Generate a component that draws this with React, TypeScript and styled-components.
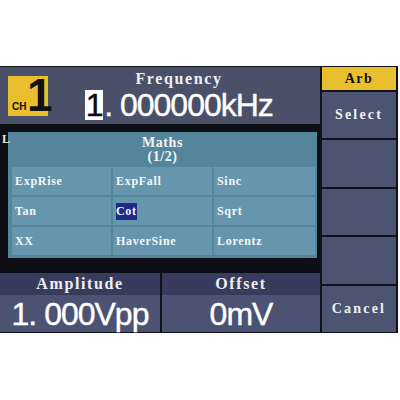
import React from "react";
import styled, { createGlobalStyle } from "styled-components";

const Global = createGlobalStyle`
  html, body { margin: 0; padding: 0; background: #ffffff; }
  body { width: 400px; height: 400px; overflow: hidden; }
`;

const serif = `"Liberation Serif", "DejaVu Serif", serif`;
const sans = `"Liberation Sans", Arial, sans-serif`;

const Page = styled.div`
  padding-top: 66px;
`;

const Screen = styled.div`
  display: flex;
  gap: 2px;
  width: 396px;
  height: 265px;
  padding: 1px 2px 1px 0;
  background: #0f1218;
`;

const MainColumn = styled.div`
  display: flex;
  flex-direction: column;
  width: 320px;
`;

const Header = styled.div`
  display: flex;
  align-items: center;
  height: 57px;
  padding: 0 10px 0 8px;
  background: #4a5068;
`;

const ChannelBadge = styled.div`
  position: relative;
  width: 40px;
  height: 40px;
  background: #e9bf2e;
  color: #111;
`;

const BadgeCh = styled.span`
  position: absolute;
  left: 4px;
  bottom: 4px;
  font: bold 10px ${sans};
`;

const BadgeNum = styled.span`
  position: absolute;
  left: 19px;
  top: -4px;
  font: bold 46px ${sans};
  line-height: 46px;
`;

const HeaderBody = styled.div`
  flex: 1;
  display: flex;
  flex-direction: column;
  align-items: center;
`;

const Label = styled.div`
  font: bold 16px ${serif};
  letter-spacing: 1.6px;
  color: #eef0f4;
  line-height: 18px;
`;

const BigValue = styled.div`
  font: 32px ${sans};
  letter-spacing: -1px;
  color: #ffffff;
  line-height: 34px;
  white-space: pre;
  -webkit-text-stroke: 0.4px #ffffff;
`;

const Cursor = styled.span`
  display: inline-block;
  width: 18px;
  margin-right: 1px;
  background: #ffffff;
  color: #0c0c14;
  -webkit-text-stroke: 0.4px #0c0c14;
  line-height: 30px;
  text-align: center;
`;

const WaveArea = styled.div`
  position: relative;
  flex: 1;
  padding: 8px 3px 0 8px;
  background: #0d0f14;
`;

const HiddenGlyph = styled.span`
  position: absolute;
  left: 2px;
  top: 8px;
  font: bold 12px ${serif};
  color: #e8e8e8;
`;

const Dialog = styled.div`
  display: flex;
  flex-direction: column;
  height: 126px;
  background: #54859b;
`;

const DialogTitle = styled.div`
  display: flex;
  flex-direction: column;
  align-items: center;
  justify-content: center;
  height: 35px;
  font: bold 14px ${serif};
  letter-spacing: 0.6px;
  line-height: 14px;
  color: #f2f4f6;
`;

const OptionGrid = styled.div`
  display: grid;
  grid-template-columns: 99px 99px 101px;
  grid-auto-rows: 28px;
  gap: 2px;
  padding: 0 2px 3px 4px;
`;

const Option = styled.div`
  display: flex;
  align-items: center;
  padding-left: 3px;
  background: #6596ae;
  font: bold 12px ${serif};
  letter-spacing: 0.7px;
  color: #f4f6f8;
`;

const Mark = styled.span<{ $on?: boolean }>`
  padding: 1px 0;
  background: ${(p) => (p.$on ? "#1d2b86" : "transparent")};
`;

const Footer = styled.div`
  display: flex;
  gap: 2px;
  height: 59px;
`;

const Readout = styled.div<{ $w: number }>`
  display: flex;
  flex-direction: column;
  width: ${(p) => p.$w}px;
`;

const ReadoutLabel = styled.div`
  display: flex;
  justify-content: center;
  align-items: center;
  height: 22px;
  background: #383c5c;
`;

const ReadoutValue = styled.div`
  flex: 1;
  display: flex;
  justify-content: center;
  align-items: center;
  background: #4b5272;
`;

const SoftColumn = styled.div`
  display: flex;
  flex-direction: column;
  gap: 2px;
  width: 74px;
`;

const SoftTitle = styled.div`
  display: flex;
  justify-content: center;
  align-items: center;
  height: 23px;
  background: #e9bf2e;
  font: bold 14px ${serif};
  letter-spacing: 1.5px;
  color: #111;
`;

const SoftKey = styled.div`
  flex: 1;
  display: flex;
  justify-content: center;
  align-items: center;
  background: #4d5472;
  font: bold 14px ${serif};
  letter-spacing: 2.2px;
  color: #eef0f4;
`;

const options = [
  "ExpRise", "ExpFall", "Sinc",
  "Tan", "Cot", "Sqrt",
  "XX", "HaverSine", "Lorentz",
];

const softKeys = ["Select", "", "", "", "Cancel"];

export default function App() {
  return (
    <Page>
      <Global />
      <Screen>
        <MainColumn>
          <Header>
            <ChannelBadge>
              <BadgeCh>CH</BadgeCh>
              <BadgeNum>1</BadgeNum>
            </ChannelBadge>
            <HeaderBody>
              <Label>Frequency</Label>
              <BigValue>
                <Cursor>1</Cursor>. 000000kHz
              </BigValue>
            </HeaderBody>
          </Header>
          <WaveArea>
            <HiddenGlyph>L</HiddenGlyph>
            <Dialog>
              <DialogTitle>
                <span>Maths</span>
                <span>(1/2)</span>
              </DialogTitle>
              <OptionGrid>
                {options.map((o) => (
                  <Option key={o}>
                    <Mark $on={o === "Cot"}>{o}</Mark>
                  </Option>
                ))}
              </OptionGrid>
            </Dialog>
          </WaveArea>
          <Footer>
            <Readout $w={160}>
              <ReadoutLabel>
                <Label>Amplitude</Label>
              </ReadoutLabel>
              <ReadoutValue>
                <BigValue>1. 000Vpp</BigValue>
              </ReadoutValue>
            </Readout>
            <Readout $w={158}>
              <ReadoutLabel>
                <Label>Offset</Label>
              </ReadoutLabel>
              <ReadoutValue>
                <BigValue>0mV</BigValue>
              </ReadoutValue>
            </Readout>
          </Footer>
        </MainColumn>
        <SoftColumn>
          <SoftTitle>Arb</SoftTitle>
          {softKeys.map((k, i) => (
            <SoftKey key={i}>{k}</SoftKey>
          ))}
        </SoftColumn>
      </Screen>
    </Page>
  );
}
